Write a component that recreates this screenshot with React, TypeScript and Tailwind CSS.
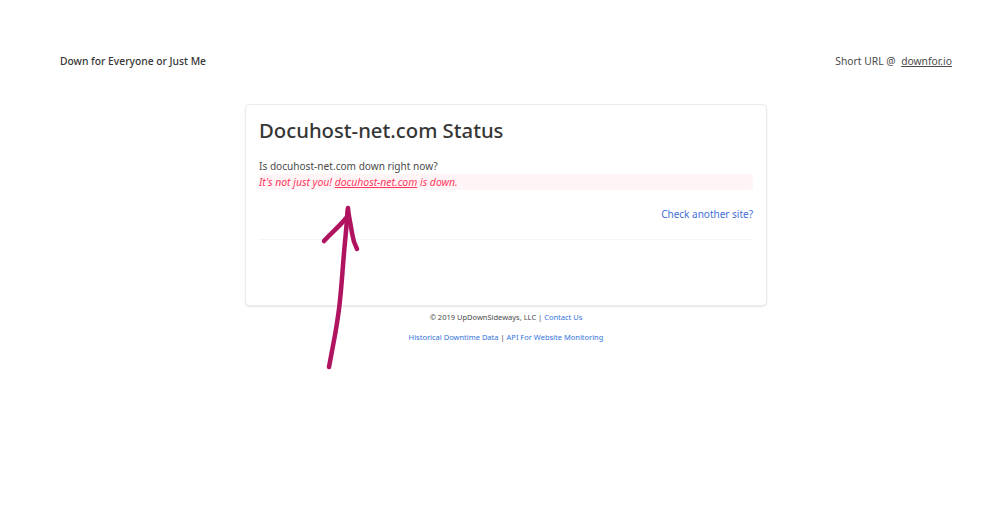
export default function App() {
  return (
    <div className="relative h-[532px] w-[999px] overflow-hidden bg-white font-['Noto_Sans',sans-serif] text-[#4a4a4a]">
      <header className="flex h-[104px] items-start justify-between pl-[60px] pr-[47px] pt-[53px]">
        <a className="text-[10.3px] leading-4 font-medium text-[#363636]">Down for Everyone or Just Me</a>
        <div className="text-[10.3px] leading-4">
          Short URL @ <a className="ml-[3px] text-[#4a4a4a] underline">downfor.io</a>
        </div>
      </header>
      <main className="ml-[245px] w-[522px]">
        <section className="h-[202px] rounded-[5px] border border-[#ebebeb] bg-white px-[13px] pt-[11px] shadow-[0_1px_2px_rgba(10,10,10,0.1)]">
          <h1 className="text-[20.3px] leading-[28px] font-medium text-[#363636]">Docuhost-net.com Status</h1>
          <p className="mt-[14px] text-[10.1px] leading-4">Is docuhost-net.com down right now?</p>
          <p className="rounded-[2px] bg-[#fff5f7] text-[10.4px] leading-4 italic text-[#ff3860]">
            It's not just you! <a className="underline">docuhost-net.com</a> is down.
          </p>
          <p className="mt-[16px] text-right text-[10px] leading-4 text-[#3f6fd8]">Check another site?</p>
          <hr className="mt-[17px] h-px border-0 bg-[#f5f5f5]" />
        </section>
        <footer className="text-center text-[7.5px] leading-3">
          <p className="mt-[5px]">© 2019 UpDownSideways, LLC | <a className="text-[#3273dc]">Contact Us</a></p>
          <p className="mt-[8px]"><a className="text-[#3273dc]">Historical Downtime Data</a> | <a className="text-[#3273dc]">API For Website Monitoring</a></p>
        </footer>
      </main>
      <svg className="absolute left-0 top-0" width="999" height="532" fill="none" stroke="#b0135f" strokeWidth="4.5" strokeLinecap="round" strokeLinejoin="round">
        <path d="M348 208 C347 220 346 232 345 242 C343 262 342 282 340 300 C339 312 337 323 335 335 C333 346 331 356 329 367" />
        <path d="M324 241 C331 233 340 226 347 217 L348 209 C349 218 351 226 352 233 C353 240 355 245 357 249" />
      </svg>
    </div>
  );
}
